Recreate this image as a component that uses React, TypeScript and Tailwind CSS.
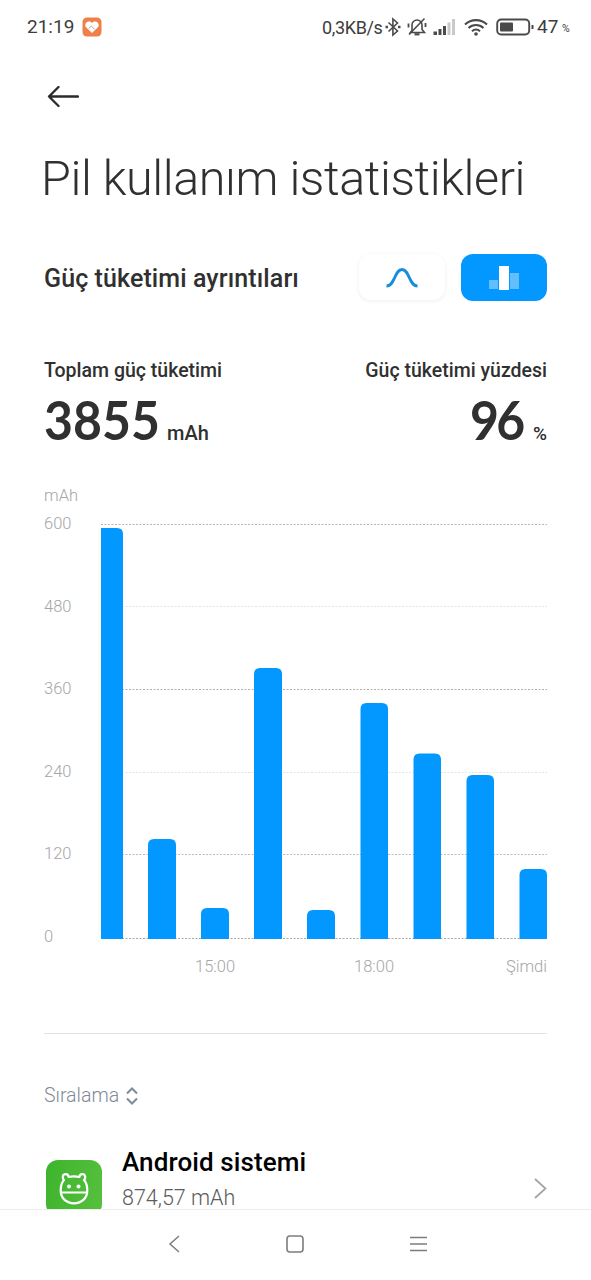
import type { ReactNode } from "react";

const yLabels = ["600", "480", "360", "240", "120", "0"];

const gridLines = [
  { y: 4.5, color: "#b5b5b5" },
  { y: 86.5, color: "#e4e4e4" },
  { y: 169.5, color: "#b0b0b0" },
  { y: 252.5, color: "#e4e4e4" },
  { y: 334.5, color: "#bdbdbd" },
  { y: 418.5, color: "#a8a8a8" },
];

// x, width and height inside the 446 x 420 plot
const bars = [
  { x: 0, w: 22, h: 411 },
  { x: 47, w: 28, h: 100 },
  { x: 100, w: 28, h: 31 },
  { x: 153, w: 28, h: 271 },
  { x: 206, w: 28, h: 29 },
  { x: 259.5, w: 27.5, h: 236 },
  { x: 312.5, w: 27.5, h: 185.5 },
  { x: 365.5, w: 27.5, h: 164 },
  { x: 418.5, w: 27.5, h: 70 },
];

function barPath(x: number, w: number, h: number, first: boolean) {
  const bottom = 419;
  const top = bottom - h;
  const r = 6;
  const left = first ? `M${x} ${bottom}V${top}` : `M${x} ${bottom}V${top + r}Q${x} ${top} ${x + r} ${top}`;
  return `${left}H${x + w - r}Q${x + w} ${top} ${x + w} ${top + r}V${bottom}Z`;
}

function StatusBar() {
  return (
    <div className="flex h-[54px] items-center pl-[27px] text-[#3d3d3d]">
      <span className="w-[55px] text-[19px]">21:19</span>
      <svg width="20" height="20" viewBox="0 0 20 20">
        <rect x="0.5" y="0.5" width="19" height="19" rx="4.5" fill="#ee8149" />
        <path d="M10 16 3.8 10C1.5 6.2 6.8 2.4 10 6c3.2-3.6 8.5.2 6.2 4Z" fill="#fff" />
        <path d="m6.5 11.5 3-2.5 3 3.5" fill="none" stroke="#d9a68a" strokeWidth="1" />
      </svg>
      <span className="ml-[220px] w-[62px] text-[18px] tracking-[-0.35px] whitespace-nowrap">0,3KB/s</span>
      <svg width="18" height="20" viewBox="0 0 18 20" fill="none" stroke="#4a4a4a" strokeWidth="1.6">
        <path d="m4.5 5.5 9 8.5-4.6 4V2l4.6 4-9 8.5" />
        <path d="M1.5 10H4M14 10h2.5" strokeWidth="2.4" />
      </svg>
      <svg className="ml-[5px]" width="20" height="20" viewBox="0 0 20 20" fill="none" stroke="#4a4a4a" strokeWidth="1.6">
        <path d="M5 13.5V8a5 5 0 0 1 10 0v4.5l2.5 3h-14l1.5-2" />
        <path d="M2 17.5 17.5 1.5" />
        <path d="M1.5 6.5v4M18.5 6v4" strokeWidth="1.8" />
        <path d="M7.5 17.3h5" strokeWidth="2.2" />
      </svg>
      <svg className="ml-1.5" width="23" height="17" viewBox="0 0 23 17" fill="#4a4a4a">
        <rect x="0.5" y="12.5" width="3.5" height="3.5" />
        <rect x="5.5" y="10" width="3" height="6" />
        <rect x="10" y="7" width="3" height="9" />
        <rect x="14.5" y="3.5" width="3" height="12.5" fill="#c9c9c9" />
        <rect x="19" y="0" width="3" height="16" fill="#c9c9c9" />
      </svg>
      <svg className="ml-2" width="24" height="18" viewBox="0 0 24 18" fill="none" stroke="#4a4a4a" strokeWidth="2.1">
        <path d="M1 6.5a16 16 0 0 1 22 0M4.5 10a11 11 0 0 1 15 0M8 13.2a6 6 0 0 1 8 0" />
        <circle cx="12" cy="16" r="1.8" fill="#4a4a4a" stroke="none" />
      </svg>
      <svg className="ml-2" width="38" height="18" viewBox="0 0 38 18">
        <rect x="1.2" y="1.5" width="32" height="15" rx="4" fill="none" stroke="#4a4a4a" strokeWidth="1.9" />
        <rect x="4" y="4.5" width="13" height="9" rx="1" fill="#4a4a4a" />
        <rect x="35.5" y="7" width="2" height="4" rx="0.6" fill="#4a4a4a" />
      </svg>
      <span className="ml-[3px] w-[25px] text-[19px]">47</span>
      <span className="mt-1 text-[10.5px]">%</span>
    </div>
  );
}

function Stat({ label, children }: { label: string; children: ReactNode }) {
  return (
    <div>
      <p className="h-6 text-[19.5px] leading-6 font-medium whitespace-nowrap">{label}</p>
      <div className="mt-[7px] flex h-[60px] items-baseline">{children}</div>
    </div>
  );
}

function Chart() {
  return (
    <div className="mt-[36px] font-light text-[#a6a6a6]">
      <p className="h-5 text-[16.5px] leading-5">mAh</p>
      <div className="mt-[14px] flex">
        <div className="-mt-px flex h-[423px] w-[57px] flex-col justify-between text-[16.5px] leading-[10px]">
          {yLabels.map((label) => (
            <span key={label}>{label}</span>
          ))}
        </div>
        <svg width="446" height="420" viewBox="0 0 446 420">
          {gridLines.map((line) => (
            <line key={line.y} x1="0" x2="446" y1={line.y} y2={line.y} stroke={line.color} strokeDasharray="2 1.5" />
          ))}
          {bars.map((bar, i) => (
            <path key={bar.x} d={barPath(bar.x, bar.w, bar.h, i === 0)} fill="#0398ff" />
          ))}
        </svg>
      </div>
      <div className="mt-[15px] flex h-5 text-[16.5px] leading-5">
        <span className="ml-[151px] w-[159px]">15:00</span>
        <span>18:00</span>
        <span className="ml-auto">Şimdi</span>
      </div>
    </div>
  );
}

function NavigationBar() {
  return (
    <nav className="flex h-[71px] items-center border-t border-[#ececec] bg-white pb-0.5">
      <svg className="ml-[168px]" width="12" height="18" viewBox="0 0 12 18" fill="none" stroke="#7d7d7d" strokeWidth="1.5">
        <path d="M11 1 2 9l9 8" />
      </svg>
      <svg className="ml-[106px]" width="18" height="18" viewBox="0 0 18 18" fill="none" stroke="#7d7d7d" strokeWidth="1.6">
        <rect x="1" y="1" width="16" height="16" rx="3" />
      </svg>
      <svg className="ml-[106px]" width="18" height="16" viewBox="0 0 18 16" stroke="#7d7d7d" strokeWidth="1.5">
        <path d="M0 1.5h17M0 8h17M0 14.5h17" />
      </svg>
    </nav>
  );
}

export default function App() {
  return (
    <div className="flex h-[1280px] w-[591px] flex-col overflow-hidden bg-white font-['Roboto',sans-serif] text-[#303030]">
      <StatusBar />

      <main className="flex-1 overflow-hidden pr-11 pl-11">
        <svg className="mt-8 ml-[3px]" width="32" height="22" viewBox="0 0 32 22" fill="none" stroke="#2b2b2b" strokeWidth="2.3">
          <path d="M31 10.5H2M11.5 1 2 10.5l9.5 9.5" strokeLinejoin="round" strokeLinecap="round" />
        </svg>

        <h1 className="mt-[41px] -ml-[3px] h-[60px] text-[48.5px] leading-[60px] font-light tracking-[-0.43px] whitespace-nowrap">Pil kullanım istatistikleri</h1>

        <div className="mt-11 flex h-12 items-center">
          <h2 className="mt-1 text-[25px] font-medium tracking-[0.1px] whitespace-nowrap">Güç tüketimi ayrıntıları</h2>
          <button className="ml-auto flex h-[46px] w-[86px] items-center justify-center rounded-xl bg-white pt-0.5 shadow-[0_1px_4px_rgba(0,0,0,0.07)]">
            <svg width="34" height="22" viewBox="0 0 34 22" fill="none" stroke="#168ddb" strokeWidth="2.8">
              <path d="M1.5 19C10 19 9.5 2.5 17 2.5S24 19 32.5 19" />
            </svg>
          </button>
          <button className="ml-4 flex h-[47px] w-[86px] items-center justify-center rounded-xl bg-[#0398ff] pt-0.5">
            <svg width="30" height="24" viewBox="0 0 30 24" fill="#fff">
              <rect x="0" y="14" width="9" height="9" opacity="0.38" />
              <rect x="21" y="7" width="9" height="16" opacity="0.38" />
              <rect x="10" y="0" width="10" height="24" />
            </svg>
          </button>
        </div>

        <div className="mt-[58px] flex justify-between">
          <Stat label="Toplam güç tüketimi">
            <span className="w-[123px] origin-left scale-x-[0.925] font-['Lato'] text-[54px] leading-[60px] font-bold">3855</span>
            <span className="text-[20px] font-medium">mAh</span>
          </Stat>
          <Stat label="Güç tüketimi yüzdesi">
            <span className="ml-auto w-[63px] origin-left scale-x-[0.925] font-['Lato'] text-[54px] leading-[60px] font-bold tracking-[-3px]">96</span>
            <span className="text-[19px] font-medium">%</span>
          </Stat>
        </div>

        <Chart />

        <hr className="mt-[56px] border-[#e3e3e3]" />

        <button className="mt-[50px] flex h-6 items-center text-[19.5px] font-light text-[#7f8a99]">
          Sıralama
          <svg className="ml-[7px]" width="12" height="18" viewBox="0 0 12 18" fill="none" stroke="#7f8a99" strokeWidth="2">
            <path d="m1 6.5 5-5 5 5M1 11.5l5 5 5-5" />
          </svg>
        </button>

        <div className="mt-[39px] flex">
          <svg className="mt-[13px] ml-0.5" width="56" height="56" viewBox="0 0 56 56">
            <defs>
              <linearGradient id="android" x1="0" y1="0.4" x2="1" y2="0.6">
                <stop offset="0" stopColor="#3fb52d" />
                <stop offset="1" stopColor="#55bf3d" />
              </linearGradient>
            </defs>
            <rect width="56" height="56" rx="12" fill="url(#android)" />
            <g fill="none" stroke="#fff" strokeWidth="2.2" strokeLinecap="round" strokeLinejoin="round">
              <path d="M18 20c-2-2-1.5-5.5 1-5.8 2.3-.3 3.5 1.3 3.7 2.8 3.3-.8 7.3-.8 10.6 0 .2-1.5 1.4-3.1 3.7-2.8 2.5.3 3 3.8 1 5.8 2.3 2.5 3.3 6 3.3 10.5 0 8-6 12.8-13.3 12.8S14.7 38.5 14.7 30.5c0-4.5 1-8 3.3-10.5Z" />
              <path d="M15 32.5h26" />
            </g>
            <circle cx="23" cy="26.5" r="2" fill="#fff" />
            <circle cx="32.5" cy="26.5" r="2" fill="#fff" />
          </svg>
          <div className="ml-5">
            <h3 className="h-[30px] text-[26px] leading-[30px] font-medium tracking-[0.1px] text-black">Android sistemi</h3>
            <p className="mt-3 text-[21.5px] leading-[18px] font-light text-[#5c5c5c]">874,57 mAh</p>
          </div>
          <svg className="mt-[31px] ml-auto" width="13" height="21" viewBox="0 0 13 21" fill="none" stroke="#a3a3a3" strokeWidth="1.7">
            <path d="m1 1 10.5 9.5L1 20" />
          </svg>
        </div>
      </main>

      <NavigationBar />
    </div>
  );
}
